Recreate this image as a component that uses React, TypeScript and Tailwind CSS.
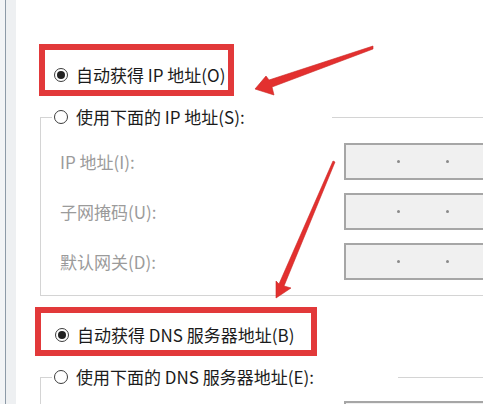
const Radio = ({ checked }: { checked?: boolean }) => (
  <span className="w-[14px] h-[14px] shrink-0 rounded-full border border-[#3c3c3c] bg-white flex items-center justify-center">
    {checked && <span className="w-[8px] h-[8px] rounded-full bg-[#222]" />}
  </span>
);

const IpBox = () => (
  <div className="w-[210px] h-[37px] shrink-0 border-2 border-[#a6a6a6] bg-[#f0f0f0] flex items-center pl-[51px] gap-[46px]">
    <span className="w-[3px] h-[3px] rounded-full bg-[#8a8a8a]" />
    <span className="w-[3px] h-[3px] rounded-full bg-[#8a8a8a]" />
    <span className="w-[3px] h-[3px] rounded-full bg-[#8a8a8a]" />
  </div>
);

const Field = ({ label }: { label?: string }) => (
  <div className="flex items-center">
    <span className="w-[284px] shrink-0 text-[#9b9b9b] leading-[20px] whitespace-nowrap">{label}</span>
    <IpBox />
  </div>
);

export default function App() {
  return (
    <div className="w-[483px] h-[404px] overflow-hidden bg-white flex relative text-[17px] text-[#1b1b1b] font-['Noto_Sans_CJK_SC','Liberation_Sans',sans-serif]">
      {/* window edge */}
      <div className="w-[5px] shrink-0 bg-[#f2f4f6]" />
      <div className="w-px shrink-0 bg-[#8d9aa7]" />
      <div className="w-[10px] shrink-0 bg-[#eef0f2]" />

      <div className="flex-1 min-w-0">
        {/* auto IP */}
        <div className="mt-[44px] ml-[23px] w-[195px] h-[52px] border-[6px] border-[#e2393a] flex items-start pt-[15px] pl-[9px]">
          <div className="flex items-center gap-2 leading-[20px] whitespace-nowrap">
            <Radio checked />
            <span>自动获得 IP 地址(O)</span>
          </div>
        </div>

        {/* manual IP group */}
        <fieldset className="mt-[10px] ml-[24px] border-t border-l border-b border-[#d4d4d4] pb-[15px]">
          <legend className="ml-[11px] w-[280px] h-[22px] pl-[2px]">
            <div className="h-[22px] flex items-center gap-2 leading-[20px] whitespace-nowrap">
              <Radio />
              <span>使用下面的 IP 地址(S):</span>
            </div>
          </legend>
          <div className="pt-[15px] pl-[19px] flex flex-col gap-[13px]">
            <Field label="IP 地址(I):" />
            <Field label="子网掩码(U):" />
            <Field label="默认网关(D):" />
          </div>
        </fieldset>

        {/* auto DNS */}
        <div className="mt-[11px] ml-[19px] w-[282px] h-[49px] border-[6px] border-[#e2393a] flex items-start pt-[12px] pl-[14px]">
          <div className="flex items-center gap-2 leading-[20px] whitespace-nowrap">
            <Radio checked />
            <span>自动获得 DNS 服务器地址(B)</span>
          </div>
        </div>

        {/* manual DNS group */}
        <fieldset className="mt-[10px] ml-[24px] border-t border-l border-b border-[#d4d4d4] pb-[15px]">
          <legend className="ml-[11px] w-[346px] h-[22px] pl-[2px]">
            <div className="h-[22px] flex items-center gap-2 leading-[20px] whitespace-nowrap">
              <Radio />
              <span>使用下面的 DNS 服务器地址(E):</span>
            </div>
          </legend>
          <div className="pt-[13px] pl-[19px] flex flex-col gap-[13px]">
            <Field />
          </div>
        </fieldset>
      </div>

      {/* annotation arrows */}
      <svg className="absolute inset-0 pointer-events-none" width="483" height="404" viewBox="0 0 483 404">
        <polygon
          points="255,89 266,76 269,80 373,46 373,49 272,87 274,95"
          fill="#e3302f"
          stroke="#c92624"
          strokeWidth="0.6"
          strokeLinejoin="round"
        />
        <polygon
          points="276,298 276,281 279,284 333,161 335,162 284,286 291,288"
          fill="#e3302f"
          stroke="#c92624"
          strokeWidth="0.6"
          strokeLinejoin="round"
        />
      </svg>
    </div>
  );
}
